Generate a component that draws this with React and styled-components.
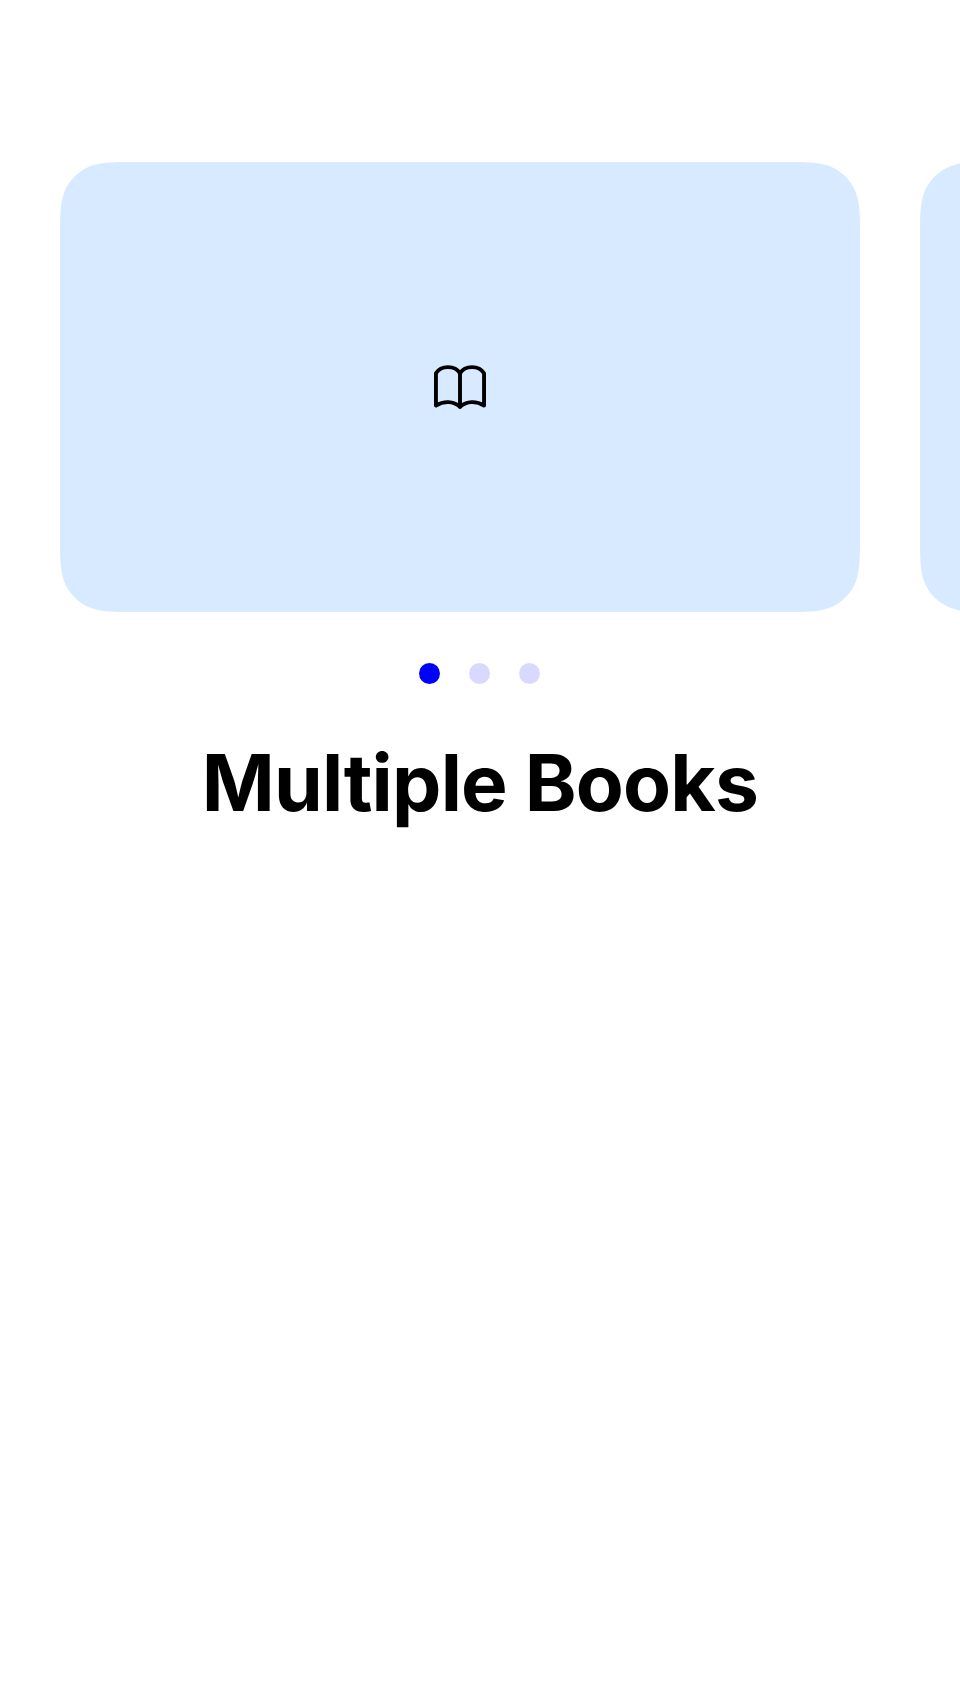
import React from "react";
import styled, { createGlobalStyle } from "styled-components";

const GlobalStyle = createGlobalStyle`
  body {
    margin: 0;
    background: #fff;
    overflow: hidden;
  }
`;

// Card outline, 800 by 450, with continuous-curvature corners of radius 50.
const CARD_SHAPE = [
  "M76.43 0H723.57C745.58 0 756.58 0 766.5 3.27L768.43 3.75C781.36 8.45 791.55 18.64 796.25 31.57C800 43.42 800 54.42 800 76.43",
  "V373.57C800 395.58 800 406.58 796.25 418.43C791.55 431.36 781.36 441.55 768.43 446.25L766.5 446.73C756.58 450 745.58 450 723.57 450",
  "H76.43C54.42 450 43.42 450 33.5 446.73L31.57 446.25C18.64 441.55 8.45 431.36 3.75 418.43C0 406.58 0 395.58 0 373.57",
  "V76.43C0 54.42 0 43.42 3.75 31.57C8.45 18.64 18.64 8.45 31.57 3.75L33.5 3.27C43.42 0 54.42 0 76.43 0Z",
].join("");

const Screen = styled.main`
  box-sizing: border-box;
  width: 100%;
  height: 1704px;
  padding-top: 162px;
  display: flex;
  flex-direction: column;
  align-items: center;
  background: #fff;
  overflow: hidden;
`;

const Carousel = styled.section`
  box-sizing: border-box;
  width: 100%;
  display: flex;
  gap: 60px;
  padding-left: 60px;
  overflow: hidden;
`;

const Card = styled.article`
  flex: none;
  width: 800px;
  height: 450px;
  display: flex;
  align-items: center;
  justify-content: center;
  background: #d8eaff;
  clip-path: path("${CARD_SHAPE}");
`;

const Icon = styled.svg`
  display: block;
  width: 52px;
  height: 44px;
  fill: none;
  stroke: #000;
  stroke-width: 3.9;
  stroke-linecap: round;
  stroke-linejoin: round;
`;

const Dots = styled.nav`
  display: flex;
  gap: 29px;
  margin-top: 51px;
  padding-right: 1px;
`;

const Dot = styled.span`
  width: 21px;
  height: 21px;
  border-radius: 50%;
  background: ${({ $active }) => ($active ? "#0000ff" : "#d9d9ff")};
`;

const Title = styled.h1`
  margin: 51px 0 0;
  font: 700 78.4px/96px Inter, "Liberation Sans", sans-serif;
  letter-spacing: -0.8px;
  white-space: nowrap;
  color: #000;
`;

const BookIcon = () => (
  <Icon viewBox="0 0 52 44" aria-hidden="true">
    <path d="M1.95 40.5V8.3C7 .1 21 .1 26 8.3C31 .1 45 .1 50.05 8.3V40.5C42.5 35.8 32.5 35.8 26 41.8C19.5 35.8 9.5 35.8 1.95 40.5Z" />
    <path d="M26 8.3V41.8" />
  </Icon>
);

const pages = [0, 1, 2];

export default function App() {
  return (
    <>
      <GlobalStyle />
      <Screen>
        <Carousel>
          {pages.map((page) => (
            <Card key={page}>
              <BookIcon />
            </Card>
          ))}
        </Carousel>
        <Dots>
          {pages.map((page) => (
            <Dot key={page} $active={page === 0} />
          ))}
        </Dots>
        <Title>Multiple Books</Title>
      </Screen>
    </>
  );
}
